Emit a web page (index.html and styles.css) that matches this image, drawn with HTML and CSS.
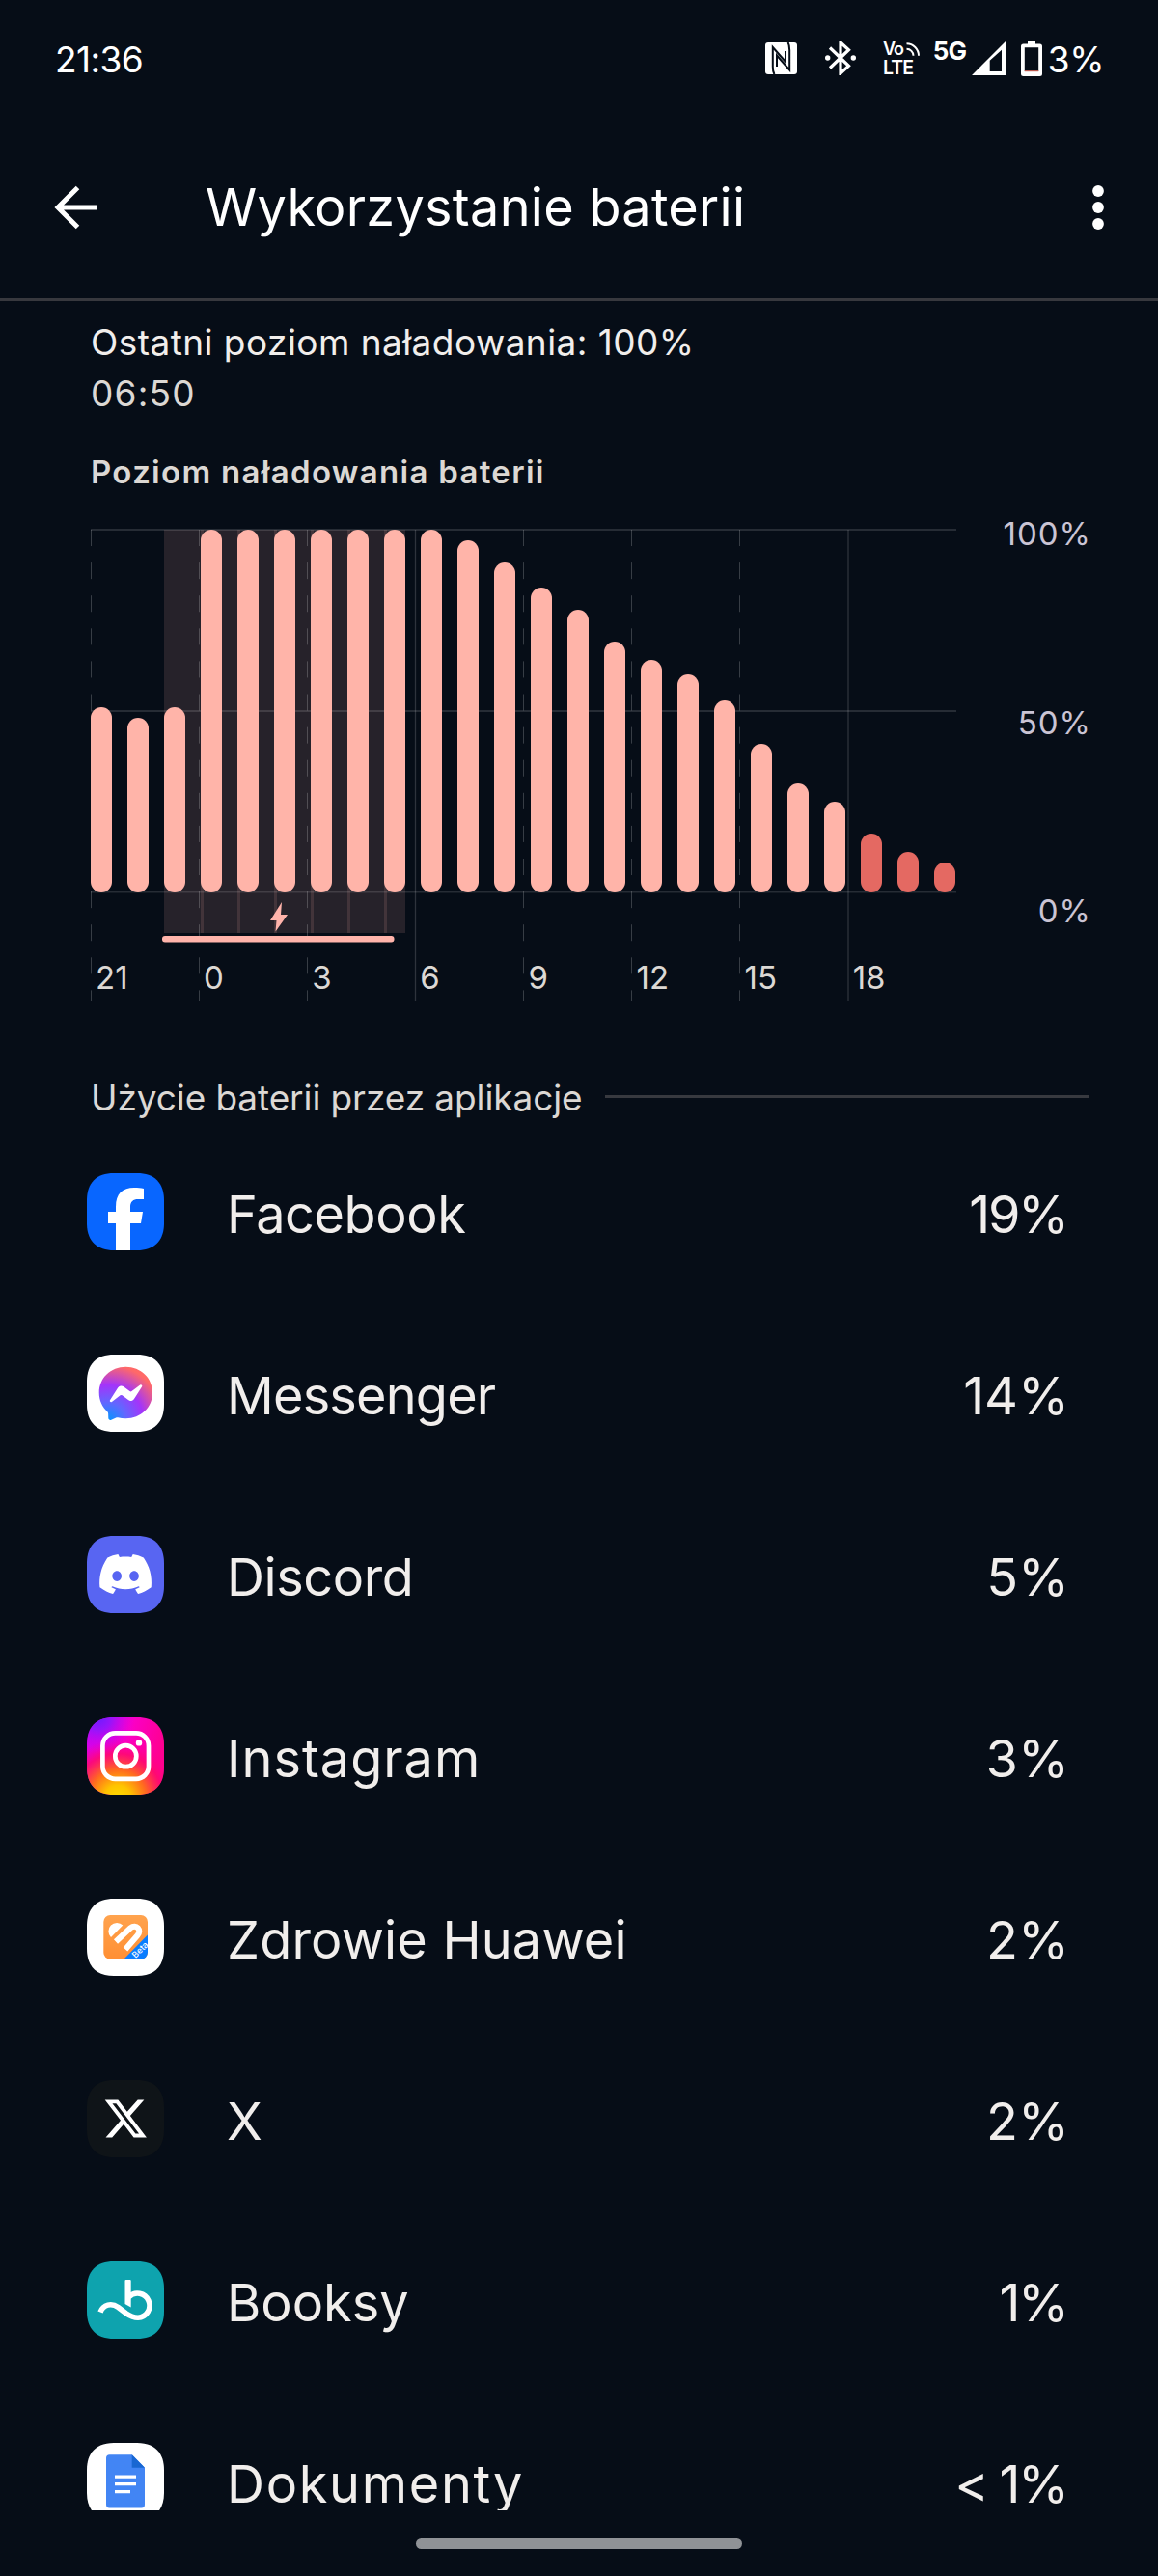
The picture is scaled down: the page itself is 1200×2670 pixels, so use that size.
FILE: index.html
```html
<!DOCTYPE html>
<html lang="pl">
<head>
<meta charset="utf-8">
<title>Wykorzystanie baterii</title>
<link rel="stylesheet" href="styles.css">
</head>
<body>
<div class="screen">
  <div class="status">
    <span class="status-time">21:36</span>
    <div class="status-icons">
      <svg class="nfc" width="33" height="33" viewBox="0 0 33 33"><rect width="33" height="33" rx="3" fill="#fff"/><path d="M9.500 33C7.800 30.500 7.800 28 7.800 25V5L21 20V9M23.500 0C25.200 2.500 25.200 5 25.200 8V28.500L12 13.500V25" fill="none" stroke="#060d17" stroke-width="2"/></svg>
      <svg class="bt" width="32" height="36" viewBox="0 0 32 36"><path d="M5 7.500L24.500 26.300L16 34V2L24.500 9.700L5 28.500" fill="none" stroke="#fff" stroke-width="3.200"/><circle cx="2.700" cy="18" r="2.700" fill="#fff"/><circle cx="29.300" cy="18" r="2.700" fill="#fff"/></svg>
      <svg class="volte" width="40" height="34" viewBox="0 0 40 34"><g class="volte-text"><text x="0" y="13.500" textLength="22" font-size="18">Vo</text><text x="0" y="33.500" textLength="32" font-size="19.500">LTE</text></g><path d="M24.500 2.300A12.500 12.500 0 0 1 37 14.800M24.500 7.800A7 7 0 0 1 31.500 14.800" fill="none" stroke="#fff" stroke-width="2"/></svg>
      <span class="net">5G</span>
      <svg class="signal" width="35" height="35" viewBox="0 0 35 35"><path fill="#fff" fill-rule="evenodd" d="M0 35L35 0V35ZM18.700 19.800V31H31V8.800Z"/></svg>
      <svg class="batt" width="22" height="37" viewBox="0 0 22 37"><path fill="#fff" fill-rule="evenodd" d="M7 0H15V3.500H19.500A2.500 2.500 0 0 1 22 6V34.500A2.500 2.500 0 0 1 19.500 37H2.500A2.500 2.500 0 0 1 0 34.500V6A2.500 2.500 0 0 1 2.500 3.500H7ZM3.800 7.300V32H18.200V7.300Z"/><rect x="3.800" y="31" width="14.400" height="1.200" fill="#b9574c"/></svg>
      <span class="status-pct">3%</span>
    </div>
  </div>

  <header class="appbar">
    <svg class="back" width="46" height="46" viewBox="0 0 46 46"><path d="M24.500 2.500L4 23L24.500 43.500M4 23H45" fill="none" stroke="#fff" stroke-width="5"/></svg>
    <h1 class="title">Wykorzystanie baterii</h1>
    <svg class="more" width="12" height="46" viewBox="0 0 12 46"><g fill="#fff"><circle cx="6" cy="6" r="5.900"/><circle cx="6" cy="23" r="5.900"/><circle cx="6" cy="40" r="5.900"/></g></svg>
  </header>

  <section class="summary">
    <p class="last">Ostatni poziom naładowania: 100%</p>
    <p class="when">06:50</p>
    <h2 class="chart-title">Poziom naładowania baterii</h2>
  </section>

  <section class="chart">
    <div class="plot">
      <svg class="grid-lines" width="897" height="489" viewBox="0 0 897 489">
        <g fill="#ffb4ab" fill-opacity=".13">
          <rect x="76" y="0" width="41" height="418"/><rect x="114" y="0" width="41" height="418"/><rect x="152" y="0" width="41" height="418"/><rect x="190" y="0" width="41" height="418"/><rect x="228" y="0" width="41" height="418"/><rect x="266" y="0" width="41" height="418"/><rect x="304" y="0" width="22" height="418"/>
        </g>
        <path d="M0 0H897M0 188H897M0 375.500H897" stroke="#fff" stroke-opacity=".13" stroke-width="2"/>
        <path d="M.5 0V489M112.500 0V489M224.500 0V489M448.500 0V489M560.500 0V489M672.500 0V489" stroke="#fff" stroke-opacity=".2" stroke-dasharray="17.050 17.050"/>
        <path d="M336.500 0V489M785 0V489" stroke="#fff" stroke-opacity=".16" stroke-width="1.300"/>
        <path d="M198 386L186 405H192.500L191.500 416.500L204 399H197Z" fill="#ffb4ab"/>
        <rect x="74" y="421" width="240.500" height="6.500" rx="3" fill="#ffb4ab"/>
      </svg>
      <div class="bars">
        <i class="bar" style="height:51%"></i><i class="bar" style="height:48%"></i><i class="bar" style="height:51%"></i><i class="bar" style="height:100%"></i><i class="bar" style="height:100%"></i><i class="bar" style="height:100%"></i><i class="bar" style="height:100%"></i><i class="bar" style="height:100%"></i><i class="bar" style="height:100%"></i><i class="bar" style="height:100%"></i><i class="bar" style="height:97%"></i><i class="bar" style="height:91%"></i><i class="bar" style="height:84%"></i><i class="bar" style="height:78%"></i><i class="bar" style="height:69%"></i><i class="bar" style="height:64%"></i><i class="bar" style="height:60%"></i><i class="bar" style="height:53%"></i><i class="bar" style="height:41%"></i><i class="bar" style="height:30%"></i><i class="bar" style="height:25%"></i><i class="bar low" style="height:16%"></i><i class="bar low" style="height:11%"></i><i class="bar low" style="height:8%"></i>
      </div>
      <div class="hours"><span>21</span><span>0</span><span>3</span><span>6</span><span>9</span><span>12</span><span>15</span><span>18</span></div>
    </div>
    <div class="levels"><span>100%</span><span>50%</span><span>0%</span></div>
  </section>

  <div class="section-head"><h2 class="section-title">Użycie baterii przez aplikacje</h2><span class="rule"></span></div>

  <ul class="apps">
    <li class="app">
      <svg class="icon" viewBox="0 0 80 80"><defs><clipPath id="tile"><path d="M28 0H52C70 0 80 10 80 28V52C80 70 70 80 52 80H28C10 80 0 70 0 52V28C0 10 10 0 28 0Z"/></clipPath></defs>
        <g clip-path="url(#tile)"><rect width="80" height="80" fill="#0866ff"/><path fill="#fff" d="M30 80V52H22V40H30V35C30 21 37 15 49 15C53 15 56 15.300 59 16V27H53C48 27 45 29.500 45 35V40H58L56 52H45V80Z"/></g></svg>
      <span class="name tidy">Facebook</span><span class="pct one">19%</span></li>
    <li class="app">
      <svg class="icon" viewBox="0 0 80 80"><defs><radialGradient id="msg" gradientUnits="userSpaceOnUse" cx="22" cy="68" r="61"><stop offset="0" stop-color="#0695ff"/><stop offset=".3" stop-color="#6168ff"/><stop offset=".6" stop-color="#a334fa"/><stop offset=".94" stop-color="#ff6968"/></radialGradient></defs>
        <g clip-path="url(#tile)"><rect width="80" height="80" fill="#fff"/><path fill="url(#msg)" d="M40.300 12.700C24.600 12.700 12.700 24.200 12.700 39.500C12.700 47.500 16 54.500 21.300 59.200C21.800 59.600 22 60.200 22.100 60.800L22.300 65.700C22.300 67.300 23.900 68.300 25.300 67.700L30.800 65.300C31.300 65.100 31.800 65.100 32.300 65.200C34.800 65.900 37.500 66.200 40.300 66.200C55.900 66.200 68 54.800 68 39.500S55.900 12.700 40.300 12.700Z"/><path fill="#fff" d="M24 47.200L32.100 34.400a4.100 4.100 0 0 1 6-1.100l6.400 4.800a1.700 1.700 0 0 0 2 0l8.700-6.600c1.200-.9 2.700.5 1.900 1.700L49 46a4.100 4.100 0 0 1-6 1.100l-6.400-4.800a1.700 1.700 0 0 0-2 0l-8.700 6.600c-1.200.9-2.700-.5-1.900-1.700z"/></g></svg>
      <span class="name snug">Messenger</span><span class="pct">14%</span></li>
    <li class="app">
      <svg class="icon" viewBox="0 0 80 80"><g clip-path="url(#tile)"><rect width="80" height="80" fill="#5865f2"/><path transform="translate(13.200 12.700) scale(2.240)" fill="#fff" d="M20.317 4.3698a19.7913 19.7913 0 00-4.8851-1.5152.0741.0741 0 00-.0785.0371c-.211.3753-.4447.8648-.6083 1.2495-1.8447-.2762-3.68-.2762-5.4868 0-.1636-.3933-.4058-.8742-.6177-1.2495a.077.077 0 00-.0785-.037 19.7363 19.7363 0 00-4.8852 1.515.0699.0699 0 00-.0321.0277C.5334 9.0458-.319 13.5799.0992 18.0578a.0824.0824 0 00.0312.0561c2.0528 1.5076 4.0413 2.4228 5.9929 3.0294a.0777.0777 0 00.0842-.0276c.4616-.6304.8731-1.2952 1.226-1.9942a.076.076 0 00-.0416-.1057c-.6528-.2476-1.2743-.5495-1.8722-.8923a.077.077 0 01-.0076-.1277c.1258-.0943.2517-.1923.3718-.2914a.0743.0743 0 01.0776-.0105c3.9278 1.7933 8.18 1.7933 12.0614 0a.0739.0739 0 01.0785.0095c.1202.099.246.1981.3728.2924a.077.077 0 01-.0066.1276 12.2986 12.2986 0 01-1.873.8914.0766.0766 0 00-.0407.1067c.3604.698.7719 1.3628 1.225 1.9932a.076.076 0 00.0842.0286c1.961-.6067 3.9495-1.5219 6.0023-3.0294a.077.077 0 00.0313-.0552c.5004-5.177-.8382-9.6739-3.5485-13.6604a.061.061 0 00-.0312-.0286zM8.02 15.3312c-1.1825 0-2.1569-1.0857-2.1569-2.419 0-1.3332.9555-2.4189 2.157-2.4189 1.2108 0 2.1757 1.0952 2.1568 2.419 0 1.3332-.9555 2.4189-2.1569 2.4189zm7.9748 0c-1.1825 0-2.1569-1.0857-2.1569-2.419 0-1.3332.9554-2.4189 2.1569-2.4189 1.2108 0 2.1757 1.0952 2.1568 2.419 0 1.3332-.946 2.4189-2.1568 2.4189Z"/></g></svg>
      <span class="name tidy">Discord</span><span class="pct">5%</span></li>
    <li class="app">
      <svg class="icon" viewBox="0 0 80 80"><defs>
        <linearGradient id="ig-base" x1="0" y1="0" x2="1" y2=".3"><stop offset="0" stop-color="#d400f0"/><stop offset=".55" stop-color="#fa00c8"/><stop offset="1" stop-color="#ff0090"/></linearGradient>
        <radialGradient id="ig-warm" gradientUnits="userSpaceOnUse" cx="32" cy="84" r="62"><stop offset="0" stop-color="#ffdc00"/><stop offset=".22" stop-color="#ffc400"/><stop offset=".48" stop-color="#ff6a20"/><stop offset=".75" stop-color="#ff0a6c" stop-opacity=".85"/><stop offset="1" stop-color="#ff0090" stop-opacity="0"/></radialGradient>
        <radialGradient id="ig-violet" gradientUnits="userSpaceOnUse" cx="12" cy="0" r="38"><stop offset="0" stop-color="#6a1cff"/><stop offset=".35" stop-color="#8a18ff" stop-opacity=".85"/><stop offset="1" stop-color="#d400f0" stop-opacity="0"/></radialGradient></defs>
        <g clip-path="url(#tile)"><rect width="80" height="80" fill="url(#ig-base)"/><rect width="80" height="80" fill="url(#ig-warm)"/><rect width="80" height="80" fill="url(#ig-violet)"/><g fill="none" stroke="#fff" stroke-width="4.700"><rect x="16.400" y="16.400" width="47.600" height="47.400" rx="13"/><circle cx="40.300" cy="40.200" r="11"/></g><circle cx="54" cy="26.400" r="3.200" fill="#fff"/></g></svg>
      <span class="name wide">Instagram</span><span class="pct">3%</span></li>
    <li class="app">
      <svg class="icon" viewBox="0 0 80 80"><defs><clipPath id="badge"><rect x="17.300" y="17" width="45.700" height="45.700" rx="7"/></clipPath><linearGradient id="hw" x1="0" y1="0" x2="0" y2="1"><stop offset="0" stop-color="#ffa34e"/><stop offset="1" stop-color="#ff8f33"/></linearGradient></defs>
        <g clip-path="url(#tile)"><rect width="80" height="80" fill="#fff"/><g clip-path="url(#badge)"><rect x="17" y="17" width="46" height="46" fill="url(#hw)"/><path d="M25 40A8.500 8.500 0 0 1 37.300 27.500Z" fill="#fff"/><path d="M30 44.500L45.200 30.300C51 25.500 57.500 32.500 52.500 38L40 52.500" fill="none" stroke="#fff" stroke-width="6"/><path d="M38 63L63 37.500V63Z" fill="#0a7dff"/><text class="beta" transform="translate(50.500 62) rotate(-45)">Beta</text></g></g></svg>
      <span class="name mid">Zdrowie Huawei</span><span class="pct">2%</span></li>
    <li class="app">
      <svg class="icon" viewBox="0 0 80 80"><g clip-path="url(#tile)"><rect width="80" height="80" fill="#0f1418"/><path transform="translate(18.700 18.300) scale(1.800)" fill="#fff" d="M18.901 1.153h3.680l-8.040 9.190L24 22.846h-7.406l-5.800-7.584-6.638 7.584H.474l8.600-9.830L0 1.154h7.594l5.243 6.932ZM17.610 20.644h2.039L6.486 3.240H4.298Z"/></g></svg>
      <span class="name">X</span><span class="pct">2%</span></li>
    <li class="app">
      <svg class="icon" viewBox="0 0 80 80"><g clip-path="url(#tile)"><rect width="80" height="80" fill="#0ea3ae"/><path d="M14 52.500C17 44.500 25.500 42.500 32.500 47.500L41 54C45 56.800 49 58.200 53 58.200A12.600 12.600 0 1 0 43.500 36.700" fill="none" stroke="#fff" stroke-width="5.600"/><path fill="#fff" d="M39.500 20Q39.500 19 40.500 19H44.700Q45.700 19 45.700 20V47.500L39.500 44Z"/></g></svg>
      <span class="name">Booksy</span><span class="pct one">1%</span></li>
    <li class="app">
      <svg class="icon" viewBox="0 0 80 80"><g clip-path="url(#tile)"><rect width="80" height="80" fill="#fff"/><path fill="#4285f4" d="M23.500 12.300H46.700L60 25.700V64A3.500 3.500 0 0 1 56.500 67.500H23.500A3.500 3.500 0 0 1 20 64V15.800A3.500 3.500 0 0 1 23.500 12.300Z"/><path fill="#1967d2" d="M46.700 12.300L60 25.700H46.700Z"/><path d="M29 35.200H51M29 42.700H51M29 50.700H45" stroke="#fff" stroke-width="3.200"/></g></svg>
      <span class="name wider">Dokumenty</span><span class="pct one">&lt; 1%</span></li>
  </ul>

  <div class="navbar"><span class="pill"></span></div>
</div>
</body>
</html>
```
FILE: styles.css
```css
* { box-sizing: border-box; margin: 0; padding: 0; }

body {
  background: #060d17;
  color: #f1eeec;
  font-family: Inter, "Liberation Sans", sans-serif;
}

svg { display: block; flex: none; }

.screen {
  width: 1200px;
  height: 2670px;
  display: flex;
  flex-direction: column;
  overflow: hidden;
}

/* Status bar */
.status {
  height: 120px;
  padding: 0 56px 0 57px;
  display: flex;
  align-items: center;
  justify-content: space-between;
  color: #fff;
  font-size: 37px;
}
.status-time { padding-top: 3px; letter-spacing: -0.6px; }
.status-icons { display: flex; align-items: center; }
.bt { margin-left: 29px; }
.volte { margin-left: 28px; overflow: visible; }
.volte-text { fill: #fff; font-weight: 600; }
.net {
  width: 34px;
  margin: 0 0 15px 12px;
  font-size: 26px;
  font-weight: 700;
  line-height: 28px;
  letter-spacing: -1px;
}
.signal { margin-left: 6px; }
.batt { margin-left: 16px; }
.status-pct { margin-left: 6px; padding-top: 3px; letter-spacing: -0.5px; }

/* App bar */
.appbar {
  height: 192px;
  padding: 0 56px;
  display: flex;
  align-items: center;
  border-bottom: 3px solid #37383e;
}
.title {
  flex: 1;
  margin-left: 111px;
  color: #fff;
  font-size: 54px;
  font-weight: 400;
  line-height: 64px;
  letter-spacing: 0.28px;
}

/* Summary */
.summary { padding: 16px 94px 0; }
.last, .when { font-size: 37px; line-height: 53px; }
.last { letter-spacing: 0.45px; }
.when { color: #dcd8d4; letter-spacing: 1.2px; }
.chart-title {
  margin-top: 34px;
  color: #dcd8d4;
  font-size: 33px;
  font-weight: 600;
  line-height: 42px;
  letter-spacing: 1.3px;
}

/* Chart */
.chart {
  display: flex;
  justify-content: space-between;
  margin-top: 39px;
  padding: 0 69px 0 94px;
}
.plot { display: grid; width: 897px; height: 489px; }
.plot > * { grid-area: 1 / 1; }
.grid-lines { overflow: visible; }
.bars {
  display: flex;
  justify-content: space-between;
  align-items: flex-end;
  width: 896px;
  height: 375.5px;
}
.bar { width: 22px; border-radius: 11px; background: #ffb4a9; }
.bar.low { background: #e46962; }
.hours {
  align-self: end;
  display: grid;
  grid-template-columns: repeat(8, 112.1px);
  padding: 0 0 4px 5px;
  color: #dcd8d4;
  font-size: 33px;
  line-height: 41px;
}
.levels {
  height: 431px;
  margin-top: -16px;
  display: flex;
  flex-direction: column;
  justify-content: space-between;
  align-items: flex-end;
  color: #cac4d4;
  font-size: 33px;
  line-height: 40px;
  letter-spacing: 1px;
}

/* App usage */
.section-head {
  display: flex;
  align-items: center;
  height: 44px;
  margin-top: 76px;
  padding: 0 71px 0 94px;
}
.section-title {
  width: 533px;
  padding-top: 3px;
  color: #dcd8d4;
  font-size: 37px;
  font-weight: 400;
  line-height: 44px;
  letter-spacing: -0.1px;
  white-space: nowrap;
}
.rule { flex: 1; height: 3px; background: #37393f; }

.apps {
  list-style: none;
  height: 1440px;
  margin-top: 4px;
  overflow: hidden;
}
.app {
  display: flex;
  align-items: center;
  height: 188px;
  padding: 0 92px 0 90px;
  font-size: 54px;
  line-height: 66px;
}
.icon { width: 80px; height: 80px; }
.name { flex: 1; margin-left: 65px; padding-top: 5px; }
.tidy { letter-spacing: -0.4px; }
.snug { letter-spacing: -0.8px; }
.mid { letter-spacing: 0.2px; }
.wide { letter-spacing: 1px; }
.wider { letter-spacing: 1.7px; }
.pct { padding-top: 5px; }
.pct.one { letter-spacing: -2.4px; margin-right: 2.4px; }
.beta { fill: #fff; font-size: 9px; font-weight: 500; }

/* Gesture bar */
.navbar { flex: 1; display: flex; align-items: center; justify-content: center; }
.pill { width: 338px; height: 11px; border-radius: 6px; background: #8f9296; }
```
